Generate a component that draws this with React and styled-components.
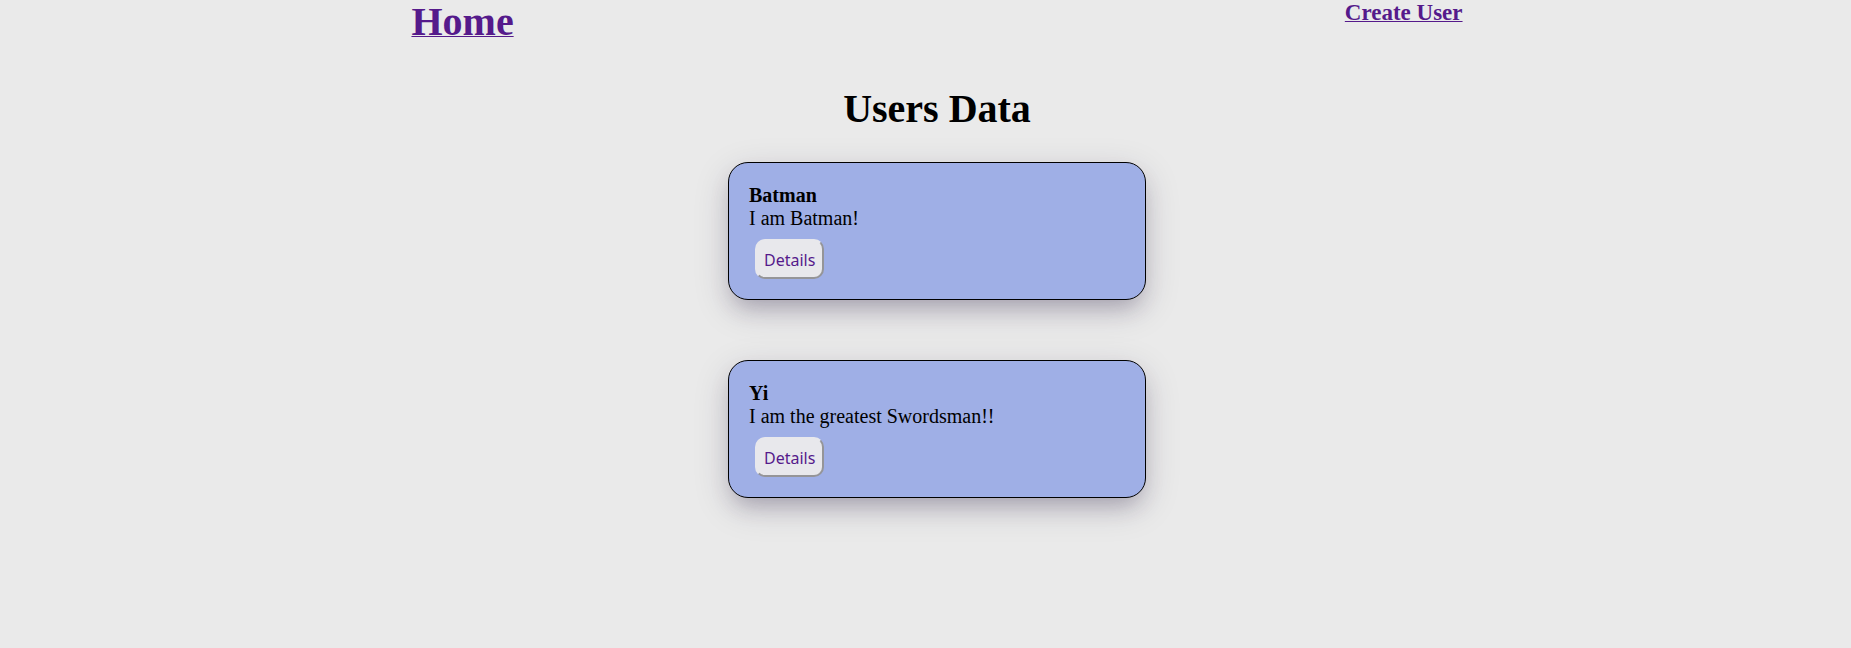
import React from "react";
import styled, { createGlobalStyle } from "styled-components";

const GlobalStyle = createGlobalStyle`
  body {
    margin: 0;
    background: #eaeaea;
    color: #000;
    font-family: "Liberation Serif", "Times New Roman", serif;
  }
`;

const Page = styled.div`
  min-height: 100vh;
  box-sizing: border-box;
  padding: 0 0 48px 23px;
`;

const Nav = styled.nav`
  display: flex;
  justify-content: space-between;
  align-items: flex-start;
  width: 57.5%;
  min-width: 320px;
  margin: 0 auto;
`;

const NavLink = styled.a`
  color: #551a8b;
  font-weight: bold;
  font-size: ${({ $large }) => ($large ? "40px" : "23px")};
  line-height: ${({ $large }) => ($large ? "44px" : "26px")};
  text-decoration: underline;
  text-decoration-thickness: 1px;
`;

const Title = styled.h1`
  margin: 42px 0 30px;
  font-size: 40px;
  line-height: 46px;
  text-align: center;
`;

const UserList = styled.main`
  display: flex;
  flex-direction: column;
  align-items: center;
  gap: 60px;
`;

const Card = styled.article`
  box-sizing: border-box;
  width: 418px;
  max-width: 100%;
  padding: 21px 20px 20px;
  border: 1px solid #000;
  border-radius: 20px;
  background: #9fafe6;
  box-shadow:
    0 10px 36px rgba(38, 26, 64, 0.16),
    0 12px 22px -6px rgba(38, 26, 64, 0.26);
`;

const UserName = styled.h2`
  margin: 0;
  font-size: 20px;
  line-height: 23px;
`;

const Bio = styled.p`
  margin: 0 0 9px;
  font-size: 20px;
  line-height: 23px;
`;

const DetailsButton = styled.button`
  display: block;
  height: 40px;
  margin: 0 6px;
  padding: 2px 7px 0;
  border: 2px outset #e8e8ec;
  border-radius: 10px;
  background: #e8e8ec;
  color: #551a8b;
  font-family: Tahoma, "Noto Sans", sans-serif;
  font-size: 16px;
`;

const users = [
  { name: "Batman", bio: "I am Batman!" },
  { name: "Yi", bio: "I am the greatest Swordsman!!" },
];

export default function App() {
  return (
    <>
      <GlobalStyle />
      <Page>
        <Nav>
          <NavLink $large href="#home">Home</NavLink>
          <NavLink href="#create">Create User</NavLink>
        </Nav>
        <Title>Users Data</Title>
        <UserList>
          {users.map((user) => (
            <Card key={user.name}>
              <UserName>{user.name}</UserName>
              <Bio>{user.bio}</Bio>
              <DetailsButton type="button">Details</DetailsButton>
            </Card>
          ))}
        </UserList>
      </Page>
    </>
  );
}
